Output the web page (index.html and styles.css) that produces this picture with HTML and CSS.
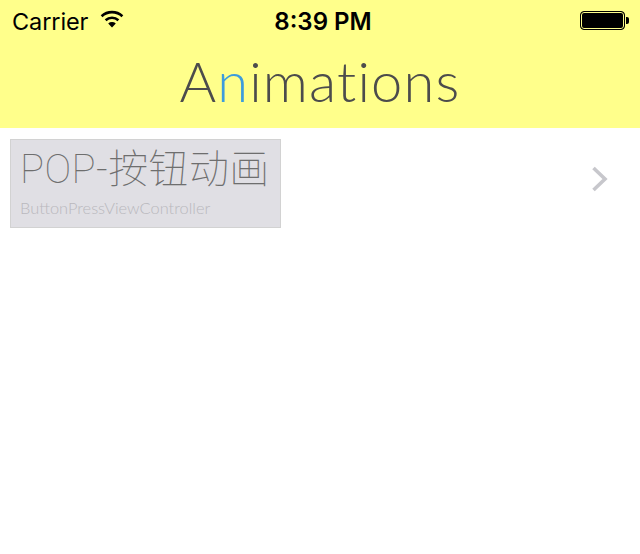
FILE: index.html
```html
<!DOCTYPE html>
<html lang="zh">
<head>
<meta charset="utf-8">
<title>Animations</title>
<link rel="stylesheet" href="styles.css">
</head>
<body>
<header class="header">
  <div class="status">
    <div class="status-left">
      <span class="carrier">Carrier</span>
      <svg class="wifi" width="26" height="19" viewBox="0 0 26 19"><path d="M13 17.5 9.2 13.4a5.6 5.6 0 0 1 7.6 0Z" fill="#000"/><path d="M6.6 10.2a9.6 9.6 0 0 1 12.8 0M2.6 6.2a15.4 15.4 0 0 1 20.8 0" fill="none" stroke="#000" stroke-width="2.6"/></svg>
    </div>
    <span class="time">8:39 PM</span>
    <div class="battery"><span class="battery-body"></span><span class="battery-cap"></span></div>
  </div>
  <h1 class="title">A<span class="accent">n</span>imations</h1>
</header>
<main class="list">
  <div class="row">
    <div class="cell">
      <div class="cell-title">POP-按钮动画</div>
      <div class="cell-sub">ButtonPressViewController</div>
    </div>
    <svg class="chevron" width="18" height="26" viewBox="0 0 18 26"><path d="M2.5 2 14 13 2.5 24" fill="none" stroke="#c7c7cc" stroke-width="3.6"/></svg>
  </div>
</main>
</body>
</html>
```
FILE: styles.css
```css
* { box-sizing: border-box; }
html, body { margin: 0; height: 100%; background: #fff; overflow: hidden; }
body { font-family: "Inter", "Liberation Sans", sans-serif; }
.header { height: 128px; background: #ffff8b; display: flex; flex-direction: column; }
.status { height: 42px; padding: 0 11px 0 12px; display: grid; grid-template-columns: 1fr auto 1fr; align-items: center; color: #000; }
.status-left { display: flex; align-items: center; gap: 11px; }
.carrier { font-size: 23.5px; font-family: "Inter", sans-serif; font-weight: 400; letter-spacing: -0.1px; }
.wifi { display: block; margin-top: -3px; }
.time { font-size: 24px; font-weight: 600; margin-left: 5px; }
.battery { justify-self: end; display: flex; align-items: center; margin-top: -2px; }
.battery-body { width: 45px; height: 19px; border: 1px solid #000; background: #000; box-shadow: inset 0 0 0 1px #ffff8b; border-radius: 4px; }
.battery-cap { width: 3px; height: 7px; background: #000; border-radius: 0 2px 2px 0; margin-left: 1px; }
.title { margin: 0; font-family: "Lato", sans-serif; font-weight: 300; font-size: 56px; line-height: 78px; letter-spacing: 1.2px; text-align: center; color: #4c4c4c; }
.accent { color: #3d9cdc; }
.list { padding: 11px 31px 0 10px; }
.row { display: flex; justify-content: space-between; align-items: flex-start; }
.cell { width: 271px; height: 89px; background: #e0dfe4; border: 1px solid #d2d2d2; padding: 7px 9px 0; }
.cell-title { font-family: "Roboto", "Noto Sans CJK SC", sans-serif; font-weight: 100; font-size: 40px; line-height: 46px; letter-spacing: 0.4px; color: #6e6e6e; white-space: nowrap; }
.cell-sub { font-family: "Lato", sans-serif; font-weight: 300; font-size: 16.4px; line-height: 20px; margin-top: 5px; color: #b9b8bd; }
.chevron { display: block; margin-top: 27px; }
```
